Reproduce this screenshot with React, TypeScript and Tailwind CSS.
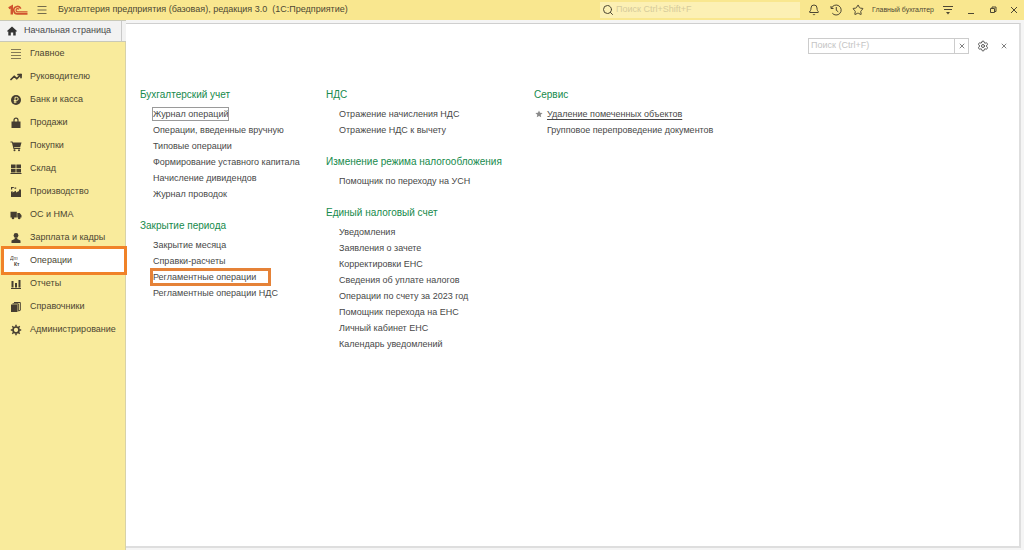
import type { ReactNode } from 'react';
import { clsx } from 'clsx';
import { Bell, Search, Settings, Star, TrendingUp } from 'lucide-react';

interface NavItem {
  label: string;
  icon: ReactNode;
  active?: boolean;
}

interface MenuLink {
  label: string;
  state?: 'focused' | 'marked' | 'favorite';
}

interface MenuSection {
  title: string;
  links: MenuLink[];
}

function Glyph({ children }: { children: ReactNode }) {
  return (
    <svg viewBox="0 0 12 12" className="size-3" fill="currentColor" aria-hidden="true">
      {children}
    </svg>
  );
}

const navItems: NavItem[] = [
  {
    label: 'Главное',
    icon: (
      <Glyph>
        <path d="M1 1h10v1H1zM1 4h10v1H1zM1 7h10v1H1zM1 10h10v1H1z" opacity="0.65" />
      </Glyph>
    ),
  },
  { label: 'Руководителю', icon: <TrendingUp className="size-3" strokeWidth={3.5} /> },
  {
    label: 'Банк и касса',
    icon: (
      <Glyph>
        <circle cx="6" cy="6" r="5" />
        <path d="M5 9.2V3.3h1.6a1.6 1.6 0 0 1 0 3.2H3.8M3.8 8h2.8" fill="none" stroke="#f9eb9c" strokeWidth="1" />
      </Glyph>
    ),
  },
  {
    label: 'Продажи',
    icon: (
      <Glyph>
        <path d="M1.5 4.5h9V11h-9z" />
        <path d="M4 6V3.2a2 2 0 0 1 4 0V6" fill="none" stroke="currentColor" strokeWidth="1.2" />
      </Glyph>
    ),
  },
  {
    label: 'Покупки',
    icon: (
      <Glyph>
        <path d="M.5 1.5h2l.4 1h8.6l-1.3 4.7H4.1l.2.9h6v1H3.5L1.9 2.5H.5z" />
        <circle cx="4.5" cy="10.3" r="1" />
        <circle cx="9" cy="10.3" r="1" />
      </Glyph>
    ),
  },
  {
    label: 'Склад',
    icon: (
      <Glyph>
        <path d="M1 1.5h4.6v3.7H1zM6.4 1.5H11v3.7H6.4zM1 6h4.6v3.6H1zM6.4 6H11v3.6H6.4zM.5 10h11v1H.5z" />
      </Glyph>
    ),
  },
  {
    label: 'Производство',
    icon: (
      <Glyph>
        <path d="M1 11V5.8l1.5-.8v1.6L6 4.8v1.8l3-1.6V3.5h2V11zM1 1h2.8v1H2.2v1.5H1zM4.5 1.5h1.7v1.2H4.5z" />
      </Glyph>
    ),
  },
  {
    label: 'ОС и НМА',
    icon: (
      <Glyph>
        <path d="M.5 2.8h6.3v5.7H.5zM7.3 4h2.4l1.8 2.2v2.3H7.3z" />
        <circle cx="3" cy="9" r="1.3" />
        <circle cx="9.2" cy="9" r="1.3" />
      </Glyph>
    ),
  },
  {
    label: 'Зарплата и кадры',
    icon: (
      <Glyph>
        <circle cx="6" cy="3.4" r="2.4" />
        <path d="M1.5 11V8.6L4.7 7V5.5h2.6V7l3.2 1.6V11z" />
      </Glyph>
    ),
  },
  {
    label: 'Операции',
    active: true,
    icon: (
      <Glyph>
        <text x="0" y="5" fontSize="5" fontStyle="italic">Дт</text>
        <text x="4" y="11" fontSize="5" fontWeight="bold">Кт</text>
      </Glyph>
    ),
  },
  {
    label: 'Отчеты',
    icon: (
      <Glyph>
        <path d="M1.5 3h2v6.5h-2zM5 5h2v4.5H5zM8.5 2h2v7.5h-2zM1 10h10v1H1z" />
      </Glyph>
    ),
  },
  {
    label: 'Справочники',
    icon: (
      <Glyph>
        <path d="M1 3.5h6.5V11H1z" />
        <path d="M2.5 2.8H8.3V10M4 1.5h6.3v7.8L8.5 10" fill="none" stroke="currentColor" strokeWidth="1" />
      </Glyph>
    ),
  },
  {
    label: 'Администрирование',
    icon: (
      <Glyph>
        <circle cx="6" cy="6" r="3" fill="none" stroke="currentColor" strokeWidth="1.7" />
        <path
          d="M6 .8v2M6 9.2v2M.8 6h2M9.2 6h2M2.3 2.3l1.4 1.4M8.3 8.3l1.4 1.4M2.3 9.7l1.4-1.4M8.3 3.7l1.4-1.4"
          stroke="currentColor"
          strokeWidth="1.5"
        />
      </Glyph>
    ),
  },
];

const columns: MenuSection[][] = [
  [
    {
      title: 'Бухгалтерский учет',
      links: [
        { label: 'Журнал операций', state: 'focused' },
        { label: 'Операции, введенные вручную' },
        { label: 'Типовые операции' },
        { label: 'Формирование уставного капитала' },
        { label: 'Начисление дивидендов' },
        { label: 'Журнал проводок' },
      ],
    },
    {
      title: 'Закрытие периода',
      links: [
        { label: 'Закрытие месяца' },
        { label: 'Справки-расчеты' },
        { label: 'Регламентные операции', state: 'marked' },
        { label: 'Регламентные операции НДС' },
      ],
    },
  ],
  [
    {
      title: 'НДС',
      links: [{ label: 'Отражение начисления НДС' }, { label: 'Отражение НДС к вычету' }],
    },
    {
      title: 'Изменение режима налогообложения',
      links: [{ label: 'Помощник по переходу на УСН' }],
    },
    {
      title: 'Единый налоговый счет',
      links: [
        { label: 'Уведомления' },
        { label: 'Заявления о зачете' },
        { label: 'Корректировки ЕНС' },
        { label: 'Сведения об уплате налогов' },
        { label: 'Операции по счету за 2023 год' },
        { label: 'Помощник перехода на ЕНС' },
        { label: 'Личный кабинет ЕНС' },
        { label: 'Календарь уведомлений' },
      ],
    },
  ],
  [
    {
      title: 'Сервис',
      links: [
        { label: 'Удаление помеченных объектов', state: 'favorite' },
        { label: 'Групповое перепроведение документов' },
      ],
    },
  ],
];

function CloseIcon({ className }: { className: string }) {
  return (
    <svg viewBox="0 0 8 8" className={className} fill="none" stroke="currentColor" aria-hidden="true">
      <path d="M1 1l6 6M7 1L1 7" />
    </svg>
  );
}

function TopBar() {
  return (
    <header className="flex h-5 items-center bg-[#f9e78f] text-[#4d4733]">
      <svg viewBox="0 0 20 12" className="ml-2 h-3 w-5 text-[#d0532f]" fill="none" stroke="currentColor" role="img" aria-label="1С">
        <path d="M.8 4.2L3.800 2.500V10.500" strokeWidth="2.4" />
        <path d="M12.800 4.600A3.700 3.700 0 1 0 9.800 9.900H19.500" strokeWidth="1.6" />
        <path d="M11 5.400A1.600 1.600 0 1 0 9.800 7.900H19.500" strokeWidth="1.2" />
      </svg>
      <button aria-label="Меню" className="ml-2 text-[#736b4c]">
        <svg viewBox="0 0 11 10" className="h-2.5 w-3" fill="none" stroke="currentColor">
          <path d="M1 1.5h9M1 5h9M1 8.5h9" />
        </svg>
      </button>
      <h1 className="ml-2.5 text-[9px] whitespace-pre">Бухгалтерия предприятия (базовая), редакция 3.0  (1С:Предприятие)</h1>

      <label className="ml-auto flex h-4 w-50 items-center bg-[#fcf0b4]">
        <Search className="ml-0.5 size-3 shrink-0" />
        <input
          type="search"
          aria-label="Поиск"
          placeholder="Поиск Ctrl+Shift+F"
          className="ml-0.5 w-full min-w-0 bg-transparent text-[9px] outline-none placeholder:text-[#d6cb9b]"
        />
      </label>

      <div className="ml-2 flex items-center gap-2.5">
        <button aria-label="Уведомления"><Bell className="size-3" /></button>
        <button aria-label="История">
          <svg viewBox="0 0 12 12" className="size-3" fill="none" stroke="currentColor">
            <path d="M1.6 4A5 5 0 1 1 2.3 9.2M1 2v2.5h2.5M6.3 3v3.3l2 1.5" />
          </svg>
        </button>
        <button aria-label="Избранное"><Star className="size-3" /></button>
      </div>
      <span className="ml-2 text-[7px]">Главный бухгалтер</span>
      <button aria-label="Сервис и настройки" className="ml-2">
        <svg viewBox="0 0 11 10" className="h-2.5 w-3" fill="none" stroke="currentColor">
          <path d="M.5 1.5h10M1.5 4.5h8" />
          <path d="M3.5 7h4l-2 2.5z" fill="currentColor" stroke="none" />
        </svg>
      </button>
      <div className="mr-1.5 ml-3 flex items-center gap-3">
        <button aria-label="Свернуть">
          <svg viewBox="0 0 10 10" className="size-2.5" stroke="currentColor"><path d="M2 8.5h6" /></svg>
        </button>
        <button aria-label="Восстановить">
          <svg viewBox="0 0 10 10" className="size-2.5" fill="none" stroke="currentColor">
            <path d="M2.5 3.5h4v4h-4zM4 3.5V2h4v4.5H6.5" />
          </svg>
        </button>
        <button aria-label="Закрыть"><CloseIcon className="size-2" /></button>
      </div>
    </header>
  );
}

function Sidebar() {
  return (
    <aside className="relative z-10 flex w-[126px] shrink-0 flex-col">
      <div className="flex h-[22px] border-y border-[#c9c9b8] bg-[#f2f2f2] pr-1">
        <button className="flex flex-1 items-center border-r border-[#c9c9c9] pl-1.5 text-[9px] text-[#4a4a4a]">
          <svg viewBox="0 0 12 12" className="mr-1.5 size-3 text-[#333333]" fill="currentColor" aria-hidden="true">
            <path d="M6 1.5L1 6l.8.8.5-.4v4.100h2.500V7.500h2.400v3h2.500V6.400l.5.4L11 6z" />
          </svg>
          Начальная страница
        </button>
      </div>
      <nav className="flex flex-1 flex-col border-r border-[#d8d2a8] bg-[#f9eb9c]">
        {navItems.map(item => (
          <a
            key={item.label}
            href="#"
            aria-current={item.active ? 'page' : undefined}
            className={clsx(
              'mr-px ml-1 flex h-[23px] items-center pl-1.5 text-[9px] text-[#4c4632]',
              item.active && 'bg-white outline-3 outline-[#f08228]',
            )}
          >
            <span className="mr-2 text-[#453d31]">{item.icon}</span>
            {item.label}
          </a>
        ))}
      </nav>
    </aside>
  );
}

function SectionBlock({ section }: { section: MenuSection }) {
  return (
    <section>
      <h2 className="text-[10px] leading-4 whitespace-nowrap text-[#168a4c]">{section.title}</h2>
      <ul className="mt-[3px] pl-[13px]">
        {section.links.map(link => (
          <li key={link.label} className="relative flex h-4 items-center">
            {link.state === 'favorite' && (
              <svg viewBox="0 0 10 10" className="absolute -left-3 size-2 text-[#8a8a8a]" fill="currentColor" aria-hidden="true">
                <path d="M5 .5l1.300 3 3.200.3-2.400 2.100.7 3.200L5 7.400 2.200 9.100l.7-3.200L.5 3.800l3.200-.3z" />
              </svg>
            )}
            <a
              href="#"
              className={clsx(
                'text-[9px] leading-3 whitespace-nowrap text-[#484848]',
                link.state === 'focused' && 'outline outline-[#9a9a9a]',
                link.state === 'favorite' && 'underline underline-offset-2',
                link.state === 'marked' && 'pr-3 outline-3 outline-[#e58238]',
              )}
            >
              {link.label}
            </a>
          </li>
        ))}
      </ul>
    </section>
  );
}

function FunctionsPanel() {
  return (
    <main className="mt-[3px] mr-[3px] mb-[2px] flex-1 border-t border-r-2 border-b-2 border-t-[#cfcfcf] border-r-[#dedede] border-b-[#dedede] bg-white">
      <div className="flex items-center justify-end pt-3.5 pr-3">
        <div className="flex h-4 w-[161px] border border-[#cccccc]">
          <input
            type="text"
            aria-label="Поиск по разделу"
            placeholder="Поиск (Ctrl+F)"
            className="min-w-0 flex-1 px-0.5 text-[9px] outline-none placeholder:text-[#c4c4c4]"
          />
          <button aria-label="Очистить" className="flex w-3.5 items-center justify-center border-l border-[#cccccc] text-[#555555]">
            <CloseIcon className="size-1.5" />
          </button>
        </div>
        <button aria-label="Настройка" className="ml-2 text-[#555555]"><Settings className="size-3" /></button>
        <button aria-label="Закрыть раздел" className="ml-3 text-[#555555]"><CloseIcon className="size-1.5" /></button>
      </div>
      <div className="grid grid-cols-[186px_208px_1fr] pt-[33px] pl-3.5">
        {columns.map((sections, i) => (
          <div key={i} className="flex flex-col gap-4">
            {sections.map(section => (
              <SectionBlock key={section.title} section={section} />
            ))}
          </div>
        ))}
      </div>
    </main>
  );
}

export default function App() {
  return (
    <div className="flex min-h-screen flex-col bg-[#f5f5f5] font-['Liberation_Sans',Arial,sans-serif]">
      <TopBar />
      <div className="flex flex-1">
        <Sidebar />
        <FunctionsPanel />
      </div>
    </div>
  );
}
